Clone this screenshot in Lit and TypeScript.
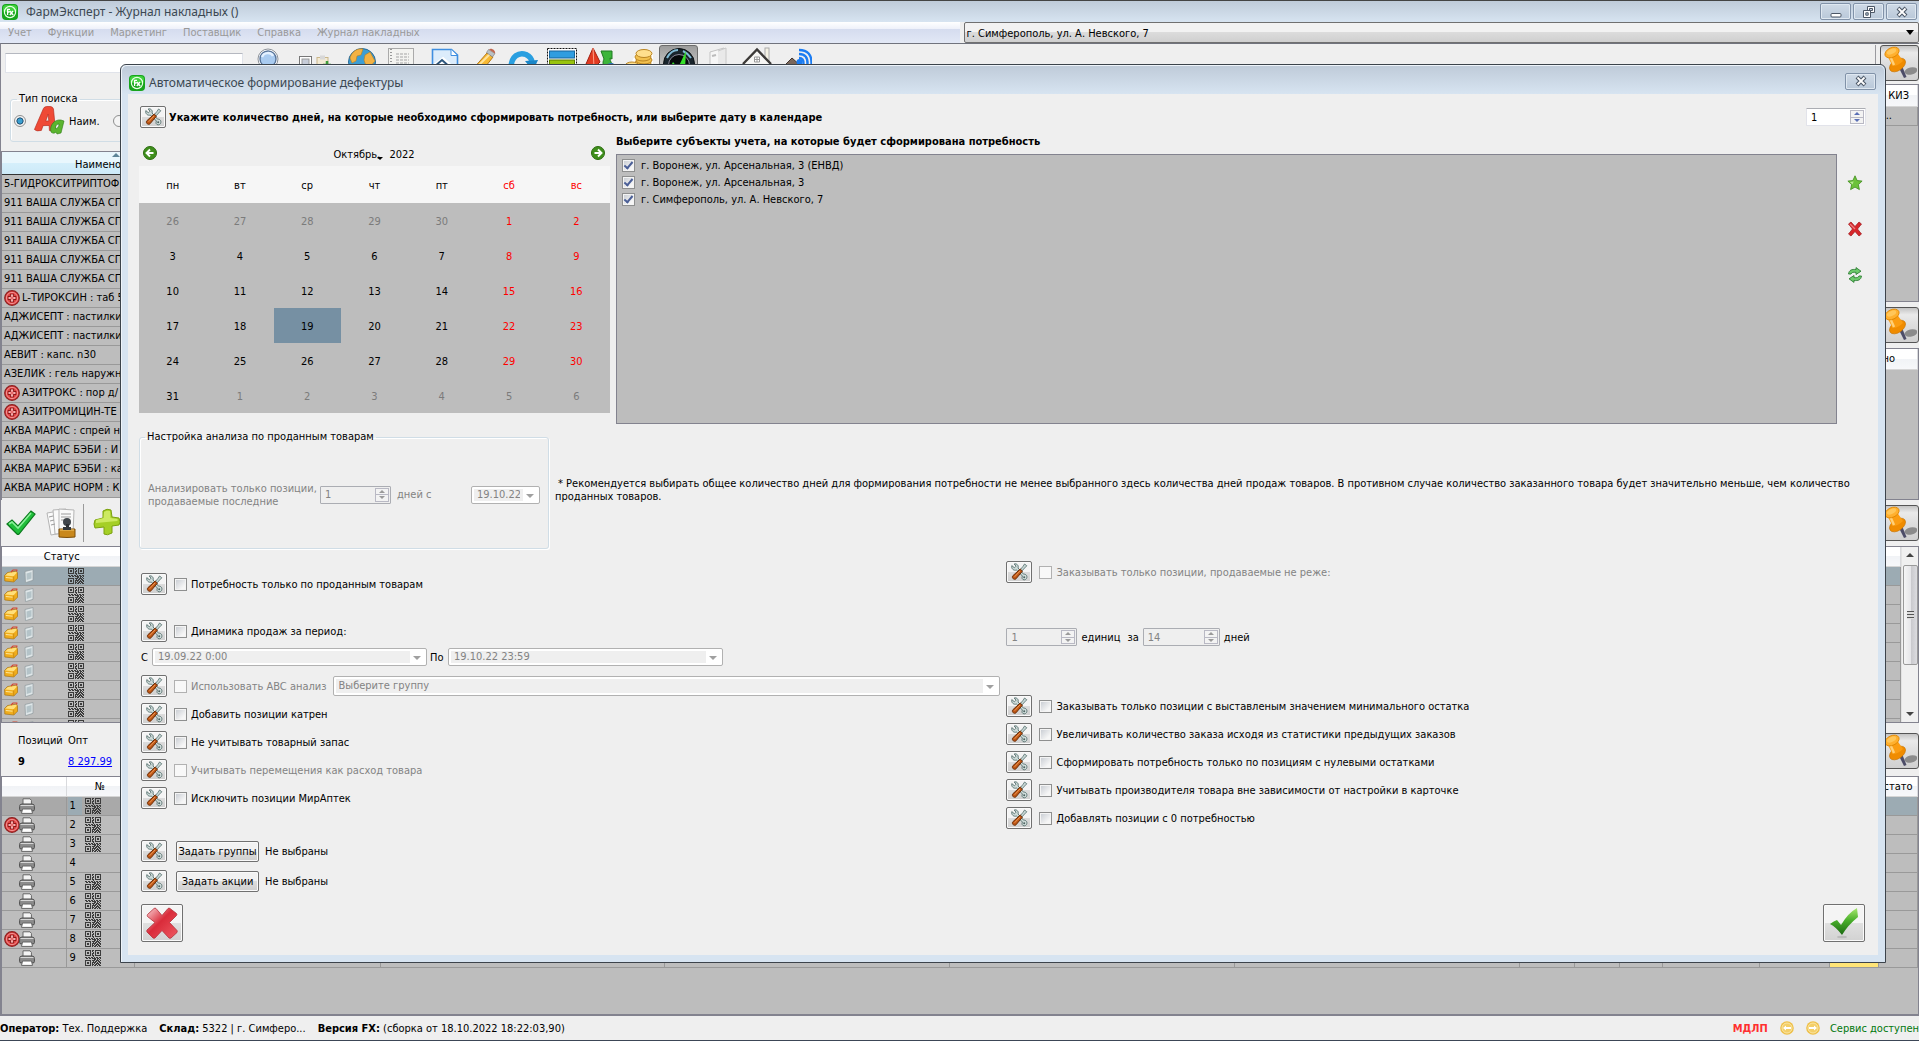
import { LitElement, html, svg, css, nothing } from "lit";
import { customElement, property } from "lit/decorators.js";
import { classMap } from "lit/directives/class-map.js";

/* ---------- icons ---------- */

const logo = html`<svg class="logo" viewBox="0 0 16 16" aria-hidden="true">
  <rect x="0" y="0" width="16" height="16" rx="4" fill="#17a51c" />
  <rect x="1" y="1" width="14" height="7" rx="3" fill="#3fd03c" />
  <circle cx="8" cy="8" r="5.6" fill="none" stroke="#e9ffe6" stroke-width="1.2" />
  <path d="M5.6 11V5.4H8M5.6 8H7.6M7.8 7l3.4 4M11 7l-3.2 4" fill="none" stroke="#fff" stroke-width="1.3" />
</svg>`;

const toolsIcon = html`<svg class="i18" viewBox="0 0 18 18" aria-hidden="true">
  <path d="M1.800 2.600 4.400 4.800 6 3.200 4.200 1C6.800.2 9 2.600 8 5l5.600 6.200c2.400-.4 4 1.800 3 4.200-1 2-3.800 1.800-4.400.2-.4-1-.2-1.800.2-2.600L6.400 7C4 8 1 5.800 1.800 2.600Z" fill="#cfdcda" stroke="#5f7876" />
  <circle cx="14.200" cy="14.200" r="1" fill="#4d6361" />
  <path d="M16.800 2.800 14.600 1 13 3.400 10 7 11.400 8.600 14.600 5Z" fill="#c9d8d6" stroke="#5f7876" stroke-width=".9" />
  <path d="M10.200 6 12.400 8.200 6 15.800C4.400 17.400 1.200 15 2.800 12.800Z" fill="#bd5514" stroke="#6a2e08" />
  <path d="M10 8 4.600 13.800" stroke="#ec9a58" />
</svg>`;

const pinIcon = html`<svg class="i34" viewBox="0 0 34 34" aria-hidden="true">
  <ellipse cx="28" cy="25" rx="6.500" ry="3.500" fill="#8b8b8b" transform="rotate(-12 28 25)" />
  <path d="m16 22 5 10 2.500-1-4-10Z" fill="#4d4d68" />
  <ellipse cx="14.500" cy="19" rx="9" ry="5.500" fill="#f08c00" stroke="#c97400" stroke-width=".6" transform="rotate(-35 14.500 19)" />
  <path d="M4 9 13.500 5.500 20 15Q15 20 9.500 20Z" fill="#fb9d12" />
  <path d="m7 10 4 9" stroke="#ffd078" stroke-width="2.400" />
  <ellipse cx="9" cy="6.500" rx="7.500" ry="4.800" fill="#ffb02e" stroke="#dd8400" stroke-width=".8" transform="rotate(-25 9 6.500)" />
  <ellipse cx="8.500" cy="5.500" rx="5" ry="2.400" fill="#ffc659" transform="rotate(-25 8.500 5.500)" />
</svg>`;

const crossBadge = html`<svg class="i16" viewBox="0 0 16 16" aria-hidden="true">
  <circle cx="8" cy="8" r="7.300" fill="#dd4040" stroke="#8d2020" stroke-width="1.200" />
  <circle cx="8" cy="8" r="5.600" fill="none" stroke="#f59a9a" stroke-width=".9" />
  <path d="M8 3.800v8.400M3.800 8h8.400" stroke="#8d1616" stroke-width="4" />
  <path d="M8 4.600v6.800M4.600 8h6.800" stroke="#ffd9d9" stroke-width="2.200" />
  <path d="M8 5.400v5.200M5.400 8h5.200" stroke="#d93a3a" stroke-width=".9" />
</svg>`;

const QR = [
  "1111110110111111",
  "1000010100100001",
  "1011010010101101",
  "1011010110101101",
  "1000010100100001",
  "1111110110111111",
  "0000000010000000",
  "1101101101011011",
  "0110110111101101",
  "0000000001101010",
  "1111110111011101",
  "1000010010110110",
  "1011010111101011",
  "1011010101011101",
  "1000010110110110",
  "1111110101101011",
];
const qrIcon = html`<svg class="i16 qr" viewBox="0 0 16 16" shape-rendering="crispEdges" aria-hidden="true">
  ${QR.map((row, y) => [...row].map((c, x) => (c === "1" ? svg`<rect x=${x} y=${y} width="1" height="1" fill="#3c3c3c" />` : nothing)))}
</svg>`;

const printerIcon = html`<svg class="i16" viewBox="0 0 16 16" aria-hidden="true">
  <path d="M4 6V.8h7L12.400 2.400V6" fill="#f4f4f4" stroke="#666" />
  <path d="M.6 11.500V8.500Q.6 6 3 6h10q2.400 0 2.400 2.500v3q0 1.400-1.400 1.400H2Q.6 12.900.6 11.500Z" fill="#8c8c8c" stroke="#4e4e4e" />
  <path d="M1.500 7.500h13" stroke="#d6d6d6" />
  <path d="M3.500 11h9l1 4.400h-11Z" fill="#fff" stroke="#666" />
</svg>`;

const boxIcon = html`<svg class="i14" viewBox="0 0 14 14" aria-hidden="true">
  <path d="M.5 6.500 3.500 3.500 12 2.200l1.500 1.600v5.400L9.800 13 .8 12Z" fill="#f0ad1c" stroke="#a5741a" stroke-width=".7" />
  <path d="M1 6.600 4 4l7.800-1.200 1 1L9.600 7.200Z" fill="#ffdf7a" />
  <path d="M9.700 7.500v5" stroke="#c07f10" stroke-width=".7" />
  <path d="M1.800 8.500 8.500 9.200" stroke="#ffe79a" />
  <path d="M7 3 9 1h3.800v1.600" fill="none" stroke="#d4452f" stroke-width="1.200" />
</svg>`;

const phoneIcon = html`<svg class="i14" viewBox="0 0 14 14" aria-hidden="true">
  <path d="m3 2.500 8-2v10.800l-7.500 2.400Z" fill="#dfe6e8" stroke="#8f9a9d" stroke-width=".7" />
  <path d="M4.500 4.500 9.500 3v6.500l-4.800 1.500Z" fill="#b4c3c8" />
</svg>`;

const toolbarIcons = [
  html`<svg class="t32" viewBox="0 0 32 32"><circle cx="16" cy="16" r="13.500" fill="#3c9ed6" stroke="#2a6a96" /><path d="M4 12c2-7 8-10 13-9l-2 6-4 1-1 5-4 2Zm15-3 5-3 5 9-5 6-4-1-2-6Z" fill="#f3b244" stroke="#b97f1f" stroke-width=".6" /><path d="M15 18l5 3-2 7-5-5Z" fill="#8fb545" /></svg>`,
  html`<svg class="t32" viewBox="0 0 32 32"><rect x="3.500" y="2.500" width="25" height="29" fill="#f3f3f0" stroke="#aaa" /><path d="M6 3v28" stroke="#999" stroke-dasharray="1 2" stroke-width="2" /><path d="M11 8h13M11 11h13M11 14h13M11 17h13" stroke="#a5a5a5" stroke-dasharray="3 1" /></svg>`,
  html`<svg class="t32" viewBox="0 0 32 32"><path d="M3.500 3.500h19l6 5.500v19h-25Z" fill="#dcecfb" stroke="#3f8ee0" stroke-width="1.600" /><path d="M22 3.500v6h6" fill="#fff" stroke="#3f8ee0" /><path d="m6 20 8-6 9 8" fill="none" stroke="#fff" stroke-width="5" /><path d="m5 21 8-7 9 8" fill="none" stroke="#2d567d" stroke-width="2" /></svg>`,
  html`<svg class="t32" viewBox="0 0 32 32"><path d="m4 24 15-17 6 4-14 18Z" fill="#f7b933" stroke="#b7791b" /><path d="m8 22 14-14" stroke="#ffe29b" stroke-width="2" /><path d="m18.500 6.500 2-3 6.500 4-2.500 3.500Z" fill="#b9c0c4" stroke="#777" stroke-width=".6" /><path d="m21 3.500c2-2 7 1 6 4Z" fill="#c0664f" /></svg>`,
  html`<svg class="t32" viewBox="0 0 32 32"><path d="M4 22C4 10 12 6 19 8.500c4 2 6 5 6 8" fill="none" stroke="#2a9fe0" stroke-width="5.500" /><path d="m18 15 13-1-5 11Z" fill="#1a86c8" /></svg>`,
  html`<svg class="t32" viewBox="0 0 32 32"><rect x="1.500" y="2.500" width="29" height="29" fill="#fff" stroke="#111" stroke-dasharray="2 1" /><rect x="3.500" y="5" width="25" height="7" fill="#2f9de0" stroke="#16659b" /><rect x="3.500" y="14" width="25" height="12" fill="#98c30f" stroke="#5c7d00" /></svg>`,
  html`<svg class="t32" viewBox="0 0 32 32"><path d="m1 18 7-16 7 14-6 6Z" fill="#e23b22" stroke="#a11f10" /><path d="m8 2 1 19" stroke="#ff9d85" /><path d="M16 5h11v8l-2-1c0 4 2 6 5 8l-8 5c-4-4-5-8-3-12Z" fill="#3cb53a" stroke="#1f7a20" /><circle cx="26" cy="23" r="6" fill="#2b6fcb" /></svg>`,
  html`<svg class="t32" viewBox="0 0 32 32"><path d="M7 16c4-3 4-14 14-13 6 0 9 3 8 8v18H2V20Z" fill="#fff" /><g fill="#f2c04e" stroke="#b98422"><ellipse cx="19" cy="17" rx="8" ry="4" /><ellipse cx="20" cy="14" rx="8" ry="4" /><ellipse cx="19" cy="11" rx="8" ry="4" /><ellipse cx="20" cy="7.500" rx="8" ry="4" fill="#ffdf8d" /><ellipse cx="8" cy="20" rx="7" ry="4" fill="#ffdf8d" /></g></svg>`,
  html`<svg class="t32" viewBox="0 0 32 32"><circle cx="16" cy="18" r="15.500" fill="#18242c" stroke="#0c1114" /><path d="M4 12c3-6 7-8 11-8M20 5c4 2 6 4 8 7" stroke="#7fb9d4" stroke-width="2" fill="none" /><circle cx="16" cy="19" r="10.500" fill="#05090b" stroke="#889" /><path d="m10 16 5 6 8-17-1 18-6 5-7-10Z" fill="#37e02c" /></svg>`,
  html`<svg class="t32" viewBox="0 0 32 32"><path d="m8 6 14-4v28l-14-2Z" fill="#f6f6f6" stroke="#c3c3c3" /><path d="m16 5 8-3v26h-8" fill="#e9e9e9" stroke="#c8c8c8" /><path d="m10 10 4-1" stroke="#bbb" stroke-width="2" /></svg>`,
  html`<svg class="t32" viewBox="0 0 32 32"><rect x="24" y="2" width="4" height="14" fill="#f4f1e4" stroke="#aaa" /><path d="M5 16 16 5l11 11v14H5Z" fill="#f6f6f4" /><path d="M2 18 16 3.500 30 18" fill="none" stroke="#3c3a38" stroke-width="2.400" /><path d="M13.500 11h5v5h-5ZM16 11v5M13.500 13.500h5" fill="#fff" stroke="#999" /></svg>`,
  html`<svg class="t32" viewBox="0 0 32 32"><path d="M4 20 12 12l9 8Z" fill="#7a675c" stroke="#40352f" /><g fill="none" stroke="#1b7cf2" stroke-width="2.400"><path d="M19 12q5 0 4.500 6" /><path d="M19 8q9 0 8.500 10" /><path d="M19 4q13 0 12.500 14" /></g><circle cx="19.500" cy="16" r="3" fill="#1b7cf2" /></svg>`,
];

const lensIcon = html`<svg class="t32" viewBox="0 0 32 32" aria-hidden="true"><circle cx="16" cy="13" r="10" fill="#fff" stroke="#8d9299" /><circle cx="16" cy="13" r="8" fill="#a9cbf0" stroke="#587499" stroke-width="1.400" /><path d="M10 11c2-5 9-5 11-1" fill="none" stroke="#e4f1ff" stroke-width="2.500" /><path d="m22 20 6 7" stroke="#555" stroke-width="4" /></svg>`;
const clipIcon = html`<svg class="t32" viewBox="0 0 32 32" aria-hidden="true"><rect x=".5" y="10.500" width="12" height="12" fill="#fff" stroke="#777" /><rect x="3" y="13" width="7" height="7" fill="#c6ccd8" stroke="#999" /><rect x="18" y="11.500" width="11" height="14" fill="#f3ead4" stroke="#c9b68a" /><rect x="21" y="9.500" width="5" height="4" fill="#d8d8d8" /><path d="M28 15v8M24 19h8" stroke="#3e9b3b" stroke-width="2.500" /></svg>`;
const lettersIcon = html`<svg class="i32" viewBox="0 0 32 32" aria-hidden="true">
  <path fill-rule="evenodd" d="M3 26 9 4q.5-2 3-2.500L16 1q2 0 3 2l5 21-6 1-1-5-6 1-1 5q-5 2-7 0Zm10-10 3-.5L14.500 9Z" fill="#ef4a36" stroke="#b32617" stroke-width=".6" transform="rotate(8 13 14)" />
  <path fill-rule="evenodd" d="M18 27c-2-7 4-13 10-12l3 1-3 12-4 1-1-2c-2 2-4 1-5 0Zm5-3c2-1 3-3 3-5-3 0-4 3-3 5Z" fill="#5bb52f" stroke="#2c7a12" stroke-width=".6" />
</svg>`;

const acceptIcon = html`<svg class="i32" viewBox="0 0 32 32" aria-hidden="true">
  <path d="m2 17 5-4 6 6L26 4l4 3-16 20q-1 1-2 0Z" fill="#1fbf3a" stroke="#0b7a1d" stroke-width="1.200" />
  <path d="m4 17 3-2 6 6L26 6" fill="none" stroke="#8cf09a" stroke-width="1.600" />
</svg>`;
const docsIcon = html`<svg class="i32" viewBox="0 0 32 32" aria-hidden="true">
  <g fill="#fafafa" stroke="#b5b5b5"><path d="m1 6 12-2 3 22-11 2Z" /><path d="m7 3 13-1 2 24-13 1Z" /><path d="m13 2 15 1-1 24-14-1Z" /></g>
  <path d="M15 7h10M15 10h10M15 13h7M3 10l4-1M4 14l4-1M5 18l4-1" stroke="#9b9b9b" />
  <circle cx="21" cy="15" r="4" fill="#41464b" /><path d="M20 17h3v5h-3Z" fill="#2d3033" />
  <path d="M13 22h16v8q-8 1-16 0Z" fill="#c9881c" stroke="#7d4f0a" /><path d="M14 23h14" stroke="#f1c56a" /><path d="M17 20h8v3h-8Z" fill="#33373a" />
</svg>`;
const plusIcon = html`<svg class="i32" viewBox="0 0 32 32" aria-hidden="true">
  <path d="M10 4q4-3 8-1l1 7 7 1q2 4 0 7l-7 1v7q-5 3-8 1v-7l-9 1q-2-4 0-8l8-2Z" fill="#a5cf26" stroke="#7ba10f" />
  <path d="M11 5q3-2 6-1l.5 7 7 1v2L3 16v-3l7.500-2Z" fill="#cdea62" />
</svg>`;

const starIcon = html`<svg class="i16" viewBox="0 0 16 16" aria-hidden="true"><path d="m8 .8 2.100 4.700 5 .6-3.700 3.500 1 5L8 12.100l-4.400 2.500 1-5L.9 6.100l5-.6Z" fill="#6cc23a" stroke="#3d8a1a" stroke-width=".8" /><path d="M8 2.500 6.500 6.500 2.800 7l2.800 2.400" fill="#b6e88f" /></svg>`;
const deleteIcon = html`<svg class="i16" viewBox="0 0 16 16" aria-hidden="true"><path d="m1.500 3 2.500-2 4 4.500L12 1l2.500 2-4 5 4 5-2.500 2L8 10.500 4 15l-2.500-2 4-5Z" fill="#d8262b" stroke="#9c1518" stroke-width=".7" /><path d="m3 3 5 5" stroke="#ee7f80" stroke-width="1.200" /></svg>`;
const refreshIcon = html`<svg class="i16" viewBox="0 0 16 16" aria-hidden="true"><g fill="#6cca6a" stroke="#2f7f36" stroke-width=".9"><path d="M1.500 7C2 3 5 2 9 2.600V.6l5 3.600-5 3.300V5.400C6 5 5 5.200 4 7Z" /><path d="M14.500 9c-.5 4-3.500 5-7.500 4.400v2l-5-3.600 5-3.300v2.100c3 .4 4 .2 5-1.600Z" /></g></svg>`;

const navIcon = (dir: "prev" | "next") => html`<svg class="i14" viewBox="0 0 14 14" aria-hidden="true">
  <circle cx="7" cy="7" r="6.500" fill="#3f8f1c" stroke="#2c6c10" />
  <path d=${dir === "prev" ? "M7 3.500 3.500 7 7 10.500M4 7h6.500" : "M7 3.500 10.500 7 7 10.500M10 7H3.500"} fill="none" stroke="#fff" stroke-width="1.900" />
</svg>`;

const cancelIcon = html`<svg class="i32" viewBox="0 0 32 32" aria-hidden="true">
  <defs><linearGradient id="red" x1="0" y1="0" x2="1" y2="1"><stop offset="0" stop-color="#fbd5d7" /><stop offset=".45" stop-color="#d92b3a" /><stop offset="1" stop-color="#ef5a62" /></linearGradient></defs>
  <path d="M1.500 7.500 8 1.500q1-.8 2 0l6 7 6-7q1-.8 2 0l6.500 5q.8 1 0 2L23.500 15.500l7.500 8q.5 1 0 2l-6 5.500q-1 .5-2 0l-7-7.500L9 31q-1 .5-2 0l-6-6q-.5-1 0-2l8-7.500L1.500 9.500q-.5-1 0-2Z" fill="url(#red)" stroke="#b3303a" stroke-width=".8" />
</svg>`;
const okIcon = html`<svg class="i32" viewBox="0 0 32 32" aria-hidden="true">
  <defs><linearGradient id="grn" x1="0" y1="0" x2="0" y2="1"><stop offset="0" stop-color="#a8e86f" /><stop offset=".45" stop-color="#4bb02c" /><stop offset="1" stop-color="#1b6a12" /></linearGradient></defs>
  <path d="M2 17q4-3 7-4l4 5Q20 6 29 1l1 9Q20 18 14 28Q8 20 2 17Z" fill="url(#grn)" />
  <ellipse cx="14" cy="30" rx="5" ry="1.200" fill="#bbb" />
</svg>`;

const coinArrow = (dir: "prev" | "next") => html`<svg class="i14" viewBox="0 0 14 14" aria-hidden="true">
  <circle cx="7" cy="7" r="6.800" fill="#eec04a" /><circle cx="7" cy="7" r="5" fill="#f4cf68" stroke="#fbe6a6" />
  <path d=${dir === "prev" ? "m3 7 3-2.500v1.500h5v2H6v1.500Z" : "m11 7-3-2.500v1.500H3v2h5v1.500Z"} fill="#fff" />
</svg>`;

const closeGlyph = html`<svg class="g12" viewBox="0 0 12 12" aria-hidden="true"><path d="m2 2 8 8M10 2l-8 8" stroke="#4c5766" stroke-width="4" /><path d="m2.500 2.500 7 7M9.500 2.500l-7 7" stroke="#fff" stroke-width="1.800" /></svg>`;
const minGlyph = html`<svg class="g12" viewBox="0 0 12 12" aria-hidden="true"><rect x="1" y="7.500" width="10" height="3.500" rx="1" fill="#fff" stroke="#4c5766" /></svg>`;
const maxGlyph = html`<svg class="g12" viewBox="0 0 12 12" aria-hidden="true"><path d="M4.500.5h7v6h-7Z M6.500 2.500h3v2h-3Z" fill="#fff" stroke="#4c5766" fill-rule="evenodd" /><path d="M.5 4.500h7v7h-7Z M2.800 6.800h2.400v2.400H2.800Z" fill="#fff" stroke="#4c5766" fill-rule="evenodd" /></svg>`;

/* ---------- styles shared by every window ---------- */

const shared = css`
  :host {
    font-family: "DejaVu Sans Condensed", "DejaVu Sans", "Liberation Sans", sans-serif;
    font-size: 11px;
    line-height: 13px;
    color: #000;
  }
  * { box-sizing: border-box; }
  button, input, select { font: inherit; color: inherit; margin: 0; }
  button { padding: 0; cursor: default; }
  svg { display: block; flex: none; }
  .logo, .i16 { width: 16px; height: 16px; }
  .i14 { width: 14px; height: 14px; }
  .i18 { width: 18px; height: 18px; }
  .i32, .t32 { width: 32px; height: 32px; }
  .i34 { width: 34px; height: 34px; }
  .g12 { width: 12px; height: 12px; }
  .title { display: flex; align-items: center; background: linear-gradient(#bfcbd9, #d7e4f1); font-family: "Noto Sans", "Open Sans", sans-serif; font-size: 12px; color: #3b4852; }
  .title h1 { flex: 1; margin: 0; font: inherit; }
  .win { display: grid; place-items: center; width: 31px; height: 17px; border: 1px solid #8192a8; border-radius: 2px; background: linear-gradient(#cfdae6, #b9c8d9); box-shadow: inset 0 0 0 1px #dfe8f1; }
`;

/* ---------- modal window ---------- */

const WEEK = ["пн", "вт", "ср", "чт", "пт", "сб", "вс"];
const MONTH = [
  [26, 27, 28, 29, 30, 1, 2],
  [3, 4, 5, 6, 7, 8, 9],
  [10, 11, 12, 13, 14, 15, 16],
  [17, 18, 19, 20, 21, 22, 23],
  [24, 25, 26, 27, 28, 29, 30],
  [31, 1, 2, 3, 4, 5, 6],
];
const SUBJECTS = ["г. Воронеж, ул. Арсенальная, 3 (ЕНВД)", "г. Воронеж, ул. Арсенальная, 3", "г. Симферополь, ул. А. Невского, 7"];

@customElement("demand-dialog")
class DemandDialog extends LitElement {
  static styles = [shared, css`
    :host { display: block; border: 1px solid #3c434b; border-radius: 6px 6px 0 0; background: #d7e4f1; box-shadow: inset 1px 1px 0 #eef4fa; padding: 0 7px 7px; }
    .title { height: 28px; padding: 5px 8px 0 7px; gap: 4px; margin: 1px -6px 0; border-radius: 5px 5px 0 0; }
    .title .win { margin-bottom: 3px; }
    .body { background: #efefef; padding: 12px 12px 13px 11px; }
    .row { display: flex; align-items: center; }
    .lead { gap: 3px; padding-left: 1px; }
    .lead b { flex: 1; }
    .tool { display: grid; place-items: center; flex: none; width: 26px; height: 22px; border: 1px solid #707070; border-radius: 2px; background: linear-gradient(#f4f4f4 50%, #dcdcdc 50%, #d0d0d0); box-shadow: inset 0 0 0 1px #fafafa; }
    .upper { display: flex; margin-top: 6px; gap: 6px; }
    .calendar { width: 471px; flex: none; margin-top: 10px; }
    .nav { display: flex; align-items: center; justify-content: space-between; height: 22px; padding: 0 5px 0 4px; }
    .nav button { border: 0; background: none; padding-bottom: 4px; }
    .when { display: flex; gap: 10px; }
    .when .month::after { content: ""; display: inline-block; border: 3px solid transparent; border-top-color: #000; margin-left: -3px; vertical-align: -5px; }
    .when .month { width: 46px; white-space: nowrap; }
    .days { width: 100%; border-collapse: collapse; table-layout: fixed; text-align: center; background: #bdbdbd; }
    .days th { height: 37px; font-weight: normal; background: #f6f6f6; padding: 1px 0 0; }
    .days td { height: 35px; padding: 2px 0 0; }
    .days .off { color: #f00; }
    .days .other { color: #7b7b7b; }
    .days .today { background: #7690a3; }
    .subjects { flex: 1; display: flex; flex-direction: column; min-width: 0; }
    .subjects b { line-height: 16px; }
    .list { flex: 1; margin: 4px 0 0; padding: 2px 5px; list-style: none; min-height: 270px; background: #bdbdbd; border: 1px solid #83838f; }
    .list li { height: 17px; display: flex; align-items: center; }
    .side { display: flex; flex-direction: column; gap: 24px; padding: 38px 0 0; }
    .side button { border: 0; background: none; height: 22px; width: 23px; display: grid; place-items: center; }
    .check { display: inline-flex; align-items: center; gap: 5px; }
    .check.off { color: #838383; }
    .check input { appearance: none; width: 13px; height: 13px; flex: none; border: 1px solid #8e8f8f; background: linear-gradient(135deg, #cbcfd5, #f6f6f6 80%) content-box, #f4f4f4; padding: 1px; display: grid; place-items: center; }
    .check input:disabled { border-color: #b1b1b1; background: #f8f8f8; }
    .check input:checked::after { content: ""; width: 3px; height: 7px; border: solid #4b5f97; border-width: 0 2px 2px 0; transform: rotate(40deg); margin-top: -2px; }
    .list .check { gap: 6px; }
    .spin { display: inline-flex; height: 18px; width: 71px; border: 1px solid #abadb3; background: #fff; border-radius: 1px; padding: 1px; }
    .spin.lead-spin { width: 60px; border-color: #abadb3 #e2e3ea #e2e3ea; }
    .spin.wide { width: 77px; }
    .spin input { flex: 1; min-width: 0; border: 0; outline: 0; background: none; padding: 0 3px; appearance: textfield; height: 14px; }
    .spin input::-webkit-inner-spin-button { appearance: none; margin: 0; }
    .spin.off { color: #838383; background: #efefef; }
    .arrows { display: flex; flex-direction: column; width: 14px; }
    .arrows button { flex: 1; min-height: 0; border: 1px solid #b9b9c4; background: #f3f3f3; display: grid; place-items: center; }
    .arrows button::after { content: ""; border: 3px solid transparent; border-top: 0; border-bottom: 3px solid #5a6fb5; }
    .arrows button + button { border-top: 0; }
    .arrows button + button::after { border-bottom: 0; border-top: 3px solid #5a6fb5; }
    .off .arrows button::after { border-bottom-color: #9a9a9a; border-top-color: #9a9a9a; }
    .combo { position: relative; display: inline-flex; height: 18px; border: 1px solid #b1b1b1; border-radius: 2px; background: #fff; padding: 2px; color: #838383; }
    .combo select { appearance: none; border: 0; opacity: 1; background: #efefef; width: 100%; padding: 0 3px; margin-right: 14px; line-height: 12px; height: 100%; }
    .combo::after { content: ""; position: absolute; right: 5px; top: 50%; margin-top: -1px; border: 4px solid transparent; border-bottom: 0; border-top-color: #a0a0a0; }
    .date { width: 69px; }
    .period { width: 275px; }
    .group { flex: 1; height: 20px; }
    .analysis { display: flex; align-items: center; gap: 6px; margin-top: 6px; }
    fieldset { margin: 0; width: 410px; flex: none; border: 1px solid #d0dde6; border-radius: 3px; box-shadow: inset 1px 1px 0 #fff, 1px 1px 0 #fff; height: 119px; padding: 0 8px; color: #838383; }
    legend { color: #000; padding: 0 2px; margin-left: -3px; line-height: 14px; }
    .inner { display: flex; align-items: center; height: 94px; padding-top: 7px; }
    .inner p { margin: 0; width: 172px; }
    .inner .days-from { margin-left: 6px; flex: 1; }
    .note { margin: 0; padding-right: 8px; text-indent: 3px; }
    .options { display: grid; grid-template-columns: 866fr 860fr; padding: 0 0 0 2px; }
    .only-sold { margin-top: 24px; }
    .stack { display: flex; flex-direction: column; gap: 6px; }
    .row .check { margin-left: 7px; gap: 4px; }
    .dynamics { margin-top: 25px; }
    .dates { margin-top: 6px; gap: 3px; }
    .dates label { min-width: 8px; }
    .dates .period + label { min-width: 15px; }
    .stack.first { margin-top: 9px; }
    .grow { padding-right: 6px; }
    .grow .combo { margin-left: 6px; }
    .rare { margin-top: 12px; }
    .per { margin-top: 45px; gap: 4px; }
    .per .gap { padding: 0 3px 0 0; }
    .second { margin-top: 49px; }
    .sets { margin-top: 31px; gap: 8px; }
    .sets .row { gap: 9px; }
    .push { width: 83px; height: 21px; border: 1px solid #707070; border-radius: 2px; background: linear-gradient(#f2f2f2 50%, #dddddd 50%, #cfcfcf); box-shadow: inset 0 0 0 1px #fafafa; white-space: nowrap; }
    .sets .row > span { margin-left: -3px; }
    .foot { display: flex; justify-content: space-between; margin: 12px 1px 0 2px; }
    .foot button { display: grid; place-items: center; width: 42px; height: 38px; border: 1px solid #707070; border-radius: 2px; background: linear-gradient(#f4f4f4 50%, #e0e0e0 50%, #d2d2d2); box-shadow: inset 0 0 0 1px #fafafa; }
  `];

  private tool() {
    return html`<button class="tool" aria-label="Настройка">${toolsIcon}</button>`;
  }
  private check(label: string, disabled = false, checked = false) {
    return html`<label class="check ${disabled ? "off" : ""}"><input type="checkbox" ?disabled=${disabled} ?checked=${checked} />${label}</label>`;
  }
  private option(label: string, disabled = false) {
    return html`<div class="row">${this.tool()}${this.check(label, disabled)}</div>`;
  }
  private spin(value: number, name: string, cls = "off") {
    const off = cls.includes("off");
    return html`<span class="spin ${cls}">
      <input type="number" aria-label=${name} .value=${String(value)} ?disabled=${off} />
      <span class="arrows"><button tabindex="-1" aria-label="Больше" ?disabled=${off}></button><button tabindex="-1" aria-label="Меньше" ?disabled=${off}></button></span>
    </span>`;
  }
  private combo(id: string, value: string, cls: string, name?: string) {
    return html`<span class="combo ${cls}"><select id=${id} aria-label=${name ?? nothing} disabled><option>${value}</option></select></span>`;
  }

  render() {
    return html`
      <header class="title">${logo}<h1>Автоматическое формирование дефектуры</h1><button class="win" aria-label="Закрыть">${closeGlyph}</button></header>
      <div class="body">
        <div class="row lead">${this.tool()}
          <b>Укажите количество дней, на которые необходимо сформировать потребность, или выберите дату в календаре</b>
          ${this.spin(1, "Количество дней", "lead-spin")}
        </div>
        <div class="upper">
          <div class="calendar">
            <div class="nav">
              <button aria-label="Предыдущий месяц">${navIcon("prev")}</button>
              <div class="when"><span class="month">Октябрь,</span><span>2022</span></div>
              <button aria-label="Следующий месяц">${navIcon("next")}</button>
            </div>
            <table class="days">
              <thead><tr>${WEEK.map((d, i) => html`<th class=${i > 4 ? "off" : ""}>${d}</th>`)}</tr></thead>
              <tbody>${MONTH.map((week, w) => html`<tr>${week.map((d, i) => {
                const other = (w === 0 && d > 7) || (w === 5 && d < 7);
                return html`<td class=${classMap({ other, off: !other && i > 4, today: w === 3 && d === 19 })}>${d}</td>`;
              })}</tr>`)}</tbody>
            </table>
          </div>
          <div class="subjects">
            <b>Выберите субъекты учета, на которые будет сформирована потребность</b>
            <ul class="list">${SUBJECTS.map((s) => html`<li>${this.check(s, false, true)}</li>`)}</ul>
          </div>
          <div class="side">
            <button aria-label="Отметить все">${starIcon}</button>
            <button aria-label="Снять отметки">${deleteIcon}</button>
            <button aria-label="Обновить">${refreshIcon}</button>
          </div>
        </div>
        <div class="analysis">
          <fieldset>
            <legend>Настройка анализа по проданным товарам</legend>
            <div class="inner">
              <p>Анализировать только позиции, продаваемые последние</p>
              ${this.spin(1, "Дней продаж")}
              <label class="days-from" for="from">дней с</label>
              ${this.combo("from", "19.10.22", "date")}
            </div>
          </fieldset>
          <p class="note">* Рекомендуется выбирать общее количество дней для формирования потребности не менее выбранного здесь количества дней продаж товаров. В противном случае количество заказанного товара будет значительно меньше, чем количество проданных товаров.</p>
        </div>
        <div class="options">
          <div>
            <div class="row only-sold">${this.tool()}${this.check("Потребность только по проданным товарам")}</div>
            <div class="row dynamics">${this.tool()}${this.check("Динамика продаж за период:")}</div>
            <div class="row dates">
              <label for="d1">С</label>${this.combo("d1", "19.09.22 0:00", "period")}
              <label for="d2">По</label>${this.combo("d2", "19.10.22 23:59", "period")}
            </div>
            <div class="stack first">
              <div class="row grow">${this.tool()}${this.check("Использовать ABC анализ", true)}${this.combo("abc", "Выберите группу", "group", "Группа")}</div>
              ${this.option("Добавить позиции катрен")}
              ${this.option("Не учитывать товарный запас")}
              ${this.option("Учитывать перемещения как расход товара", true)}
              ${this.option("Исключить позиции МирАптек")}
            </div>
            <div class="stack sets">
              <div class="row">${this.tool()}<button class="push">Задать группы</button><span>Не выбраны</span></div>
              <div class="row">${this.tool()}<button class="push">Задать акции</button><span>Не выбраны</span></div>
            </div>
          </div>
          <div>
            <div class="row rare">${this.tool()}${this.check("Заказывать только позиции, продаваемые не реже:", true)}</div>
            <div class="row per">${this.spin(1, "Единиц")}<span class="gap">единиц</span><span>за</span>${this.spin(14, "Дней", "off wide")}<span>дней</span></div>
            <div class="stack second">
              ${this.option("Заказывать только позиции с выставленым значением минимального остатка")}
              ${this.option("Увеличивать количество заказа исходя из статистики предыдущих заказов")}
              ${this.option("Сформировать потребность только по позициям с нулевыми остатками")}
              ${this.option("Учитывать производителя товара вне зависимости от настройки в карточке")}
              ${this.option("Добавлять позиции с 0 потребностью")}
            </div>
          </div>
        </div>
        <footer class="foot">
          <button aria-label="Отмена">${cancelIcon}</button>
          <button aria-label="Готово">${okIcon}</button>
        </footer>
      </div>`;
  }
}

/* ---------- main window ---------- */

const MENU = ["Учет", "Функции", "Маркетинг", "Поставщик", "Справка", "Журнал накладных"];
const GOODS: [string, boolean?][] = [
  ["5-ГИДРОКСИТРИПТОФ"], ["911 ВАША СЛУЖБА СП"], ["911 ВАША СЛУЖБА СП"], ["911 ВАША СЛУЖБА СП"], ["911 ВАША СЛУЖБА СП"], ["911 ВАША СЛУЖБА СП"],
  ["L-ТИРОКСИН : таб 5", true], ["АДЖИСЕПТ : пастилки"], ["АДЖИСЕПТ : пастилки"], ["АЕВИТ : капс. n30"], ["АЗЕЛИК : гель наружн"],
  ["АЗИТРОКС : пор д/", true], ["АЗИТРОМИЦИН-ТЕ", true], ["АКВА МАРИС : спрей н"], ["АКВА МАРИС БЭБИ : И"], ["АКВА МАРИС БЭБИ : ка"], ["АКВА МАРИС НОРМ : К"],
];

@customElement("app-root")
class AppRoot extends LitElement {
  @property({ type: Number }) selected = 0;

  static styles = [shared, css`
    :host { display: flex; flex-direction: column; position: relative; min-height: 100vh; background: #efefef; overflow: hidden; border-bottom: 1px solid #3c4656; box-sizing: border-box; }
    demand-dialog { position: absolute; left: 120px; right: 33px; top: 64px; }
    .title { height: 22px; border-top: 1px solid #444; padding: 0 2px; gap: 2px; }
    .title h1 { padding-left: 6px; }
    .bar { display: flex; height: 21px; gap: 7px; }
    nav { width: 50%; margin-right: -3px; display: flex; align-items: center; gap: 16px; padding-left: 8px; background: linear-gradient(#fff, #eef1fa 33%, #d5dcef 34%, #e2e8f6); }
    nav a { color: #999; text-decoration: none; }
    .store { flex: 1; position: relative; display: flex; }
    .store select { appearance: none; flex: 1; border: 1px solid #707070; border-radius: 2px; padding: 1px 2px 0; background: linear-gradient(#f2f2f2 50%, #dcdcdc 50%, #cfcfcf); }
    .store::after { content: ""; position: absolute; right: 5px; top: 8px; border: 4px solid transparent; border-bottom: 0; border-top: 5px solid #000; }
    .work { display: flex; border-top: 1px solid #70737d; border-left: 1px solid #83838f; }
    .left { width: 247px; flex: none; }
    .search { display: block; width: 238px; height: 20px; margin: 9px 0 0 4px; border: 1px solid #e0e3ea; border-top-color: #b5b8c0; background: #fff; }
    .kind { margin: 19px 4px 0 9px; padding: 0 0 0 3px; border: 1px solid #d0dde6; border-radius: 3px; height: 50px; box-shadow: inset 1px 1px 0 #fff; }
    .kind legend { margin-left: 3px; padding: 0 2px; line-height: 14px; }
    .kind div { display: flex; align-items: center; margin-top: -1px; }
    .kind label { display: flex; align-items: center; gap: 4px; width: 99px; }
    .kind input { appearance: none; width: 12px; height: 12px; margin: 0 3px 0 0; border: 1px solid #8e8f8f; border-radius: 50%; background: #f4f4f4; }
    .kind input:checked { background: radial-gradient(#3b9fd0 30%, #123f63 45%, #f4f4f4 55%); }
    table { border-collapse: collapse; table-layout: fixed; width: 100%; }
    th { height: 21px; font-weight: normal; background: linear-gradient(#fff 50%, #f1f3f6 50%, #f7f8fa); border-bottom: 1px solid #d5d5d5; border-right: 1px solid #d9dadd; padding: 0; white-space: nowrap; }
    td { height: 19px; padding: 0 0 0 2px; border-bottom: 1px solid #999; border-right: 1px solid #999; white-space: nowrap; overflow: hidden; background: #bdbdbd; }
    .goods { width: 225px; margin-top: 9px; border-top: 1px solid #83838f; border-left: 1px solid #83838f; padding-bottom: 2px; }
    .goods th { background: linear-gradient(#e9f7fd 50%, #d5effb 50%, #cdeaf8); border-bottom: 1px solid #333; position: relative; padding-top: 3px; height: 22px; }
    .goods th::before { content: ""; position: absolute; left: 110px; top: 1px; border: 4px solid transparent; border-top: 0; border-bottom-color: #5d8497; }
    .cell { display: flex; align-items: center; gap: 2px; height: 18px; }
    .right { flex: 1; min-width: 0; display: flex; flex-direction: column; }
    .tools { display: flex; align-items: flex-start; height: 40px; padding-top: 1px; }
    .tools button { border: 0; background: none; width: 39px; height: 34px; display: grid; place-items: center; flex: none; }
    .tools .on { border: 1px solid #6c6c6c; border-radius: 3px; background: linear-gradient(#9c9c9c, #dadada); }
    .tools .split { width: 55px; }
    .tools .brk { margin-left: 5px; }
    .tools .pin { margin-left: 4px; }
    .fill { flex: 1; align-self: stretch; border-right: 1px solid #9a9a9f; }
    .pin, .tools .pin { display: grid; place-items: center; width: 39px; height: 36px; border: 1px solid #555; border-radius: 3px; background: linear-gradient(#c4c4c4, #eaeaea 20%, #dedede 50%, #d0d0d0); flex: none; }
    .grid { background: #bdbdbd; border: 1px solid #83838f; overflow: hidden; }
    .marks { flex: 217 1 0; }
    .more { flex: 151 1 0; }
    .grid .end { text-align: right; padding-right: 8px; }
    .grid .dots { text-align: right; padding-right: 25px; }
    .grid .far { text-align: right; padding-right: 22px; }
    .pinrow { display: flex; justify-content: flex-end; height: 46px; align-items: center; }
    .docs-bar { display: flex; align-items: center; height: 46px; padding: 0 0 0 4px; border-left: 1px solid #83838f; }
    .docs-bar button { border: 0; background: none; }
    .docs-bar .pin { border: 1px solid #555; background: linear-gradient(#c4c4c4, #eaeaea 20%, #dedede 50%, #d0d0d0); margin-left: auto; }
    .docs-bar .add { border-left: 1px solid #9a9a9a; height: 38px; margin-left: 5px; padding-left: 9px; display: flex; align-items: center; }
    .docs-bar .papers { margin-left: 9px; }
    .docs { display: flex; height: 177px; flex: none; border-left: 2px solid #83838f; }
    .docs-rows { flex: 1; }
    .docs th { height: 20px; }
    .docs tbody tr:first-child td, .lines .cur { background: #9cabb3; }
    .docs .cell, .lines .cell { gap: 0; }
    .docs .cell svg:nth-child(2) { margin-left: 4px; }
    .docs .cell .qr { margin-left: 32px; }
    .scroll { width: 17px; flex: none; background: #f0f0f0; border-left: 1px solid #e2e2e2; display: flex; flex-direction: column; align-items: center; padding: 6px 0; }
    .scroll::before, .scroll::after { content: ""; border: 4px solid transparent; }
    .scroll::before { border-top: 0; border-bottom: 4px solid #444; }
    .scroll::after { border-bottom: 0; border-top: 4px solid #444; margin-top: auto; }
    .thumb { margin-top: 8px; width: 15px; height: 100px; border: 1px solid #9a9a9a; border-radius: 2px; background: linear-gradient(90deg, #f5f5f5, #e6e6e9 50%, #c9c9cd 55%, #dcdce0); display: grid; place-items: center; }
    .thumb i { width: 7px; height: 8px; background: repeating-linear-gradient(#555 0 1px, #ddd 1px 3px); }
    .sum { display: flex; height: 53px; border-left: 1px solid #83838f; }
    .sum dl { margin: 0; width: 50px; padding-top: 11px; }
    .sum dl:first-child { margin-left: 17px; }
    .sum dt { margin-bottom: 8px; }
    .sum dd { margin: 0; }
    .sum .pin { margin: 10px 0 0 auto; }
    .sum a { color: #00f; }
    .lines { flex: 1; min-height: 240px; border-left-width: 2px; border-bottom-width: 2px; }
    .lines tbody tr:first-child .lead { background: #a9a9a9; }
    .lines th { height: 20px; }
    .lines .num { display: inline-block; width: 14px; line-height: 18px; margin-left: -1px; padding-left: 2px; }
    .lines .print { padding-left: 15px; }
    .lines .bad { padding-left: 0; }
    .lines .bad svg:first-child { margin-right: -1px; }
    .lines .cell .qr { margin-left: 3px; }
    .lines .late { font-weight: bold; padding-left: 0; }
    .lines .yellow { background: #ffe477; }
    .status { display: flex; align-items: center; height: 24px; white-space: nowrap; gap: 12px; }
    .status .push { margin-left: auto; color: #ff3030; }
    .status .svc { color: #00780c; margin-left: -2px; }
  `];

  render() {
    const pin = html`<button class="pin" aria-label="Закрепить">${pinIcon}</button>`;
    return html`
      <header class="title">${logo}<h1>ФармЭксперт - Журнал накладных ()</h1>
        <button class="win" aria-label="Свернуть">${minGlyph}</button><button class="win" aria-label="Восстановить">${maxGlyph}</button><button class="win" aria-label="Закрыть">${closeGlyph}</button>
      </header>
      <div class="bar">
        <nav>${MENU.map((m) => html`<a href="#">${m}</a>`)}</nav>
        <div class="store"><select aria-label="Аптека"><option>г. Симферополь, ул. А. Невского, 7</option></select></div>
      </div>
      <div class="work">
        <div class="left">
          <input class="search" type="text" aria-label="Поиск" />
          <fieldset class="kind"><legend>Тип поиска</legend>
            <div><label><input type="radio" name="kind" checked />${lettersIcon}Наим.</label><input type="radio" name="kind" aria-label="Код" /></div>
          </fieldset>
          <div class="goods"><table>
            <thead><tr><th>Наименование</th></tr></thead>
            <tbody>${GOODS.map(([name, bad]) => html`<tr><td><div class="cell">${bad ? crossBadge : nothing}${name}</div></td></tr>`)}</tbody>
          </table></div>
        </div>
        <div class="right">
          <div class="tools">
            <button aria-label="Найти">${lensIcon}</button><button class="split" aria-label="Вставить">${clipIcon}</button>
            ${toolbarIcons.map((icon, i) => html`<button class=${classMap({ on: i === 8, brk: i === 2 })} aria-label="Инструмент ${i + 1}">${icon}</button>`)}
            <div class="fill"></div>${pin}
          </div>
          <div class="grid marks"><table><thead><tr><th class="end">КИЗ</th></tr></thead><tbody><tr><td class="dots">..</td></tr></tbody></table></div>
          <div class="pinrow">${pin}</div>
          <div class="grid more"><table><thead><tr><th class="far">но</th></tr></thead></table></div>
        </div>
      </div>
      <div class="docs-bar">
        <button aria-label="Принять">${acceptIcon}</button><button class="papers" aria-label="Документы">${docsIcon}</button><button class="add" aria-label="Добавить">${plusIcon}</button>${pin}
      </div>
      <div class="grid docs">
        <div class="docs-rows"><table>
          <colgroup><col width="120" /><col /></colgroup>
          <thead><tr><th>Статус</th><th></th></tr></thead>
          <tbody>${Array.from({ length: 9 }, () => html`<tr><td><div class="cell">${boxIcon}${phoneIcon}${qrIcon}</div></td><td></td></tr>`)}</tbody>
        </table></div>
        <div class="scroll"><div class="thumb"><i></i></div></div>
      </div>
      <div class="sum">
        <dl><dt>Позиций</dt><dd><b>9</b></dd></dl>
        <dl><dt>Опт</dt><dd><a href="#">8 297.99</a></dd></dl>
        ${pin}
      </div>
      <div class="grid lines"><table>
        <colgroup><col width="64" /><col width="68" /><col width="246" /><col /><col /><col /><col /><col width="55" /><col width="45" /><col width="43" /><col width="97" /><col width="70" /><col width="49" /><col width="39" /></colgroup>
        <thead><tr><th></th><th>№</th><th></th><th></th><th></th><th></th><th></th><th></th><th></th><th></th><th></th><th></th><th></th><th>стато</th></tr></thead>
        <tbody>${Array.from({ length: 9 }, (_, i) => html`<tr>
          <td class="lead"><div class="cell print ${i === 1 || i === 7 ? "bad" : ""}">${i === 1 || i === 7 ? crossBadge : nothing}${printerIcon}</div></td>
          <td class="lead"><div class="cell"><span class="num ${i === this.selected ? "cur" : ""}">${i + 1}</span>${i === 3 ? nothing : qrIcon}</div></td>
          <td></td><td></td><td></td><td></td><td></td><td></td><td></td><td></td><td></td><td></td><td class="yellow"></td><td class="late ${i === this.selected ? "cur" : ""}">0</td>
        </tr>`)}</tbody>
      </table></div>
      <footer class="status">
        <span><b>Оператор:</b> Тех. Поддержка</span><span><b>Склад:</b> 5322 | г. Симферо...</span><span><b>Версия FX:</b> (сборка от 18.10.2022 18:22:03,90)</span>
        <b class="push">МДЛП</b>${coinArrow("prev")}${coinArrow("next")}<span class="svc">Сервис доступен</span>
      </footer>
      <demand-dialog></demand-dialog>`;
  }
}
